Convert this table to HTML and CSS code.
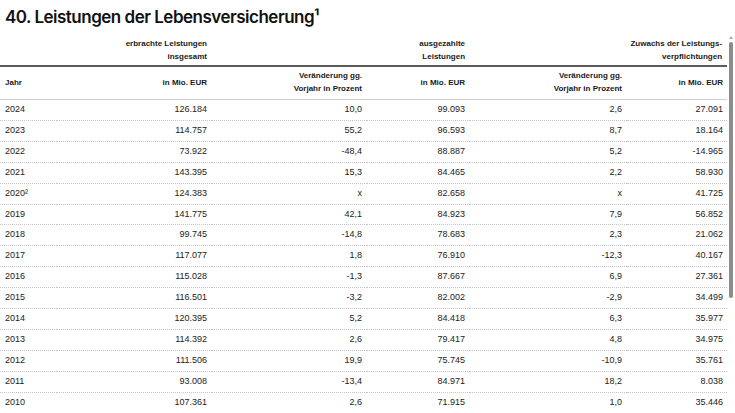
FILE: index.html
```html
<!DOCTYPE html>
<html lang="de">
<head>
<meta charset="utf-8">
<title>Leistungen der Lebensversicherung</title>
<link rel="stylesheet" href="styles.css">
</head>
<body>
<div class="page">
  <h1 class="title">40. Leistungen der Lebensversicherung¹</h1>
  <div class="scroller">
    <div class="table-wrap">
      <table class="data">
        <colgroup>
          <col class="c1"><col class="c2"><col class="c3"><col class="c4"><col class="c5"><col class="c6">
        </colgroup>
        <thead>
          <tr class="group">
            <th colspan="2">erbrachte Leistungen<br>insgesamt</th>
            <th colspan="2">ausgezahlte<br>Leistungen</th>
            <th colspan="2">Zuwachs der Leistungs-<br>verpflichtungen</th>
          </tr>
          <tr class="sub">
            <th class="left">Jahr</th>
            <th>in Mio. EUR</th>
            <th>Veränderung gg.<br>Vorjahr in Prozent</th>
            <th>in Mio. EUR</th>
            <th>Veränderung gg.<br>Vorjahr in Prozent</th>
            <th>in Mio. EUR</th>
          </tr>
        </thead>
        <tbody>
          <tr><td>2024</td><td>126.184</td><td>10,0</td><td>99.093</td><td>2,6</td><td>27.091</td></tr>
          <tr><td>2023</td><td>114.757</td><td>55,2</td><td>96.593</td><td>8,7</td><td>18.164</td></tr>
          <tr><td>2022</td><td>73.922</td><td>-48,4</td><td>88.887</td><td>5,2</td><td>-14.965</td></tr>
          <tr><td>2021</td><td>143.395</td><td>15,3</td><td>84.465</td><td>2,2</td><td>58.930</td></tr>
          <tr><td>2020²</td><td>124.383</td><td>x</td><td>82.658</td><td>x</td><td>41.725</td></tr>
          <tr><td>2019</td><td>141.775</td><td>42,1</td><td>84.923</td><td>7,9</td><td>56.852</td></tr>
          <tr><td>2018</td><td>99.745</td><td>-14,8</td><td>78.683</td><td>2,3</td><td>21.062</td></tr>
          <tr><td>2017</td><td>117.077</td><td>1,8</td><td>76.910</td><td>-12,3</td><td>40.167</td></tr>
          <tr><td>2016</td><td>115.028</td><td>-1,3</td><td>87.667</td><td>6,9</td><td>27.361</td></tr>
          <tr><td>2015</td><td>116.501</td><td>-3,2</td><td>82.002</td><td>-2,9</td><td>34.499</td></tr>
          <tr><td>2014</td><td>120.395</td><td>5,2</td><td>84.418</td><td>6,3</td><td>35.977</td></tr>
          <tr><td>2013</td><td>114.392</td><td>2,6</td><td>79.417</td><td>4,8</td><td>34.975</td></tr>
          <tr><td>2012</td><td>111.506</td><td>19,9</td><td>75.745</td><td>-10,9</td><td>35.761</td></tr>
          <tr><td>2011</td><td>93.008</td><td>-13,4</td><td>84.971</td><td>18,2</td><td>8.038</td></tr>
          <tr><td>2010</td><td>107.361</td><td>2,6</td><td>71.915</td><td>1,0</td><td>35.446</td></tr>
        </tbody>
      </table>
    </div>
    <div class="scrollbar" aria-hidden="true">
      <span class="scroll-arrow"></span>
      <span class="scroll-thumb"></span>
    </div>
  </div>
</div>
</body>
</html>
```
FILE: styles.css
```css
html, body {
  margin: 0;
  padding: 0;
  background: #fff;
}
body {
  font-family: "Liberation Sans", Arial, sans-serif;
  color: #222;
  overflow: hidden;
}
.page {
  width: 735px;
  height: 413px;
  display: flex;
  flex-direction: column;
  overflow: hidden;
}
.title {
  margin: 0;
  height: 35px;
  box-sizing: border-box;
  padding: 6px 5px 0;
  font-family: Inter, "Liberation Sans", sans-serif;
  font-weight: 600;
  font-size: 17px;
  line-height: 22px;
  color: #111;
  letter-spacing: -0.5px;
  flex: none;
}
.scroller {
  flex: 1;
  min-height: 0;
  display: flex;
  overflow: hidden;
}
.table-wrap {
  width: 727px;
  flex: none;
}
.scrollbar {
  width: 8px;
  flex: none;
  display: flex;
  flex-direction: column;
  align-items: center;
  padding-top: 1px;
  gap: 3px;
}
.scroll-arrow {
  width: 0;
  height: 0;
  border-left: 2.5px solid transparent;
  border-right: 2.5px solid transparent;
  border-bottom: 3px solid #a8a8a8;
}
.scroll-thumb {
  width: 4px;
  height: 256px;
  border-radius: 2px;
  background: #8c8c8c;
}
.data {
  width: 727px;
  table-layout: fixed;
  border-collapse: collapse;
  border-spacing: 0;
}
.c1 { width: 57px; }
.c2 { width: 155px; }
.c3 { width: 155px; }
.c4 { width: 103px; }
.c5 { width: 157px; }
.c6 { width: 100px; }
.data th {
  font-weight: 700;
  font-size: 8px;
  line-height: 13px;
  text-align: right;
  vertical-align: bottom;
  color: #1a1a1a;
  padding: 2px 5px 2px;
}
.data th.left { text-align: left; vertical-align: middle; }
.group th {
  border-bottom: 2px solid #5a5a5a;
}
.sub th {
  padding: 2px 5px 4px;
  vertical-align: middle;
  border-bottom: 1px solid #cfcfcf;
}
.sub th:last-child, .data td:last-child { padding-right: 4px; }
.data td {
  font-size: 9px;
  line-height: 13.9px;
  padding: 3px 5px;
  text-align: right;
  color: #222;
  border-bottom: 1px dotted #c4c4c4;
}
.data td:first-child { text-align: left; }
```
